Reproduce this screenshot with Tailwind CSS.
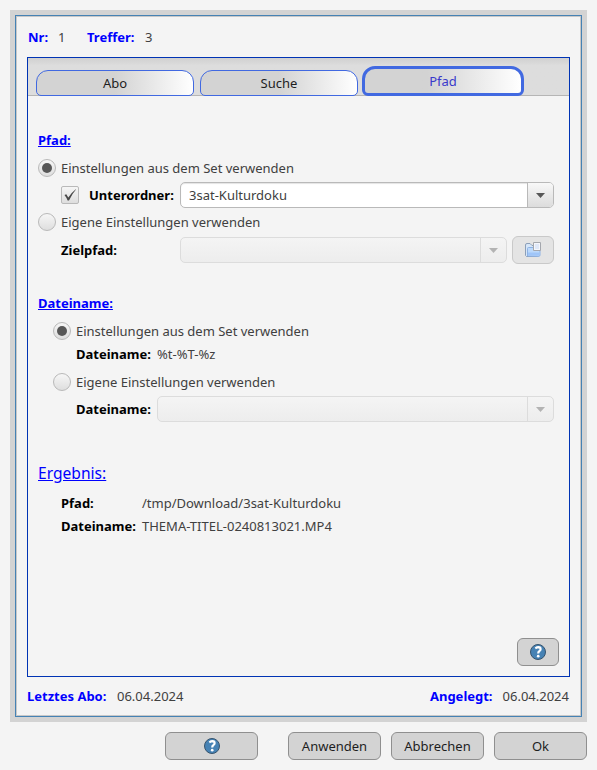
<!DOCTYPE html>
<html lang="de">
<head>
<meta charset="utf-8">
<title>Abo</title>
<script src="https://cdn.jsdelivr.net/npm/@tailwindcss/browser@4"></script>
</head>
<body class="w-[597px] h-[770px] overflow-hidden bg-[#f4f4f4] p-[10px] font-['Noto_Sans',sans-serif] text-[13px] leading-5 text-[#404040] whitespace-nowrap">
<main class="flex flex-col w-[577px] h-[712px] border-5 border-[#d3d3d3]">
 <div class="flex-1 flex flex-col border border-[#4682b4]">
  <div class="flex-1 flex flex-col border border-[#c8c8c8] px-[10px]">
   <div class="flex h-10 pt-[10px] pl-px">
    <b class="w-[30px] text-[#0000ff]">Nr:</b><span class="w-[29px]">1</span><b class="w-[58px] text-[#0000ff]">Treffer:</b><span>3</span>
   </div>
   <section class="h-[620px] flex flex-col border border-[#0033b4]">
    <nav class="flex items-end h-[38px] shrink-0 bg-linear-to-b from-[#d0d0d0] via-[#dddddd] via-20% to-[#dddddd] shadow-[inset_0_-1px_#b5b5b5] pl-2 text-[#1e1e1e]">
     <div class="w-[158px] h-[26px] flex items-center justify-center border border-[#4169e1] rounded-t-[12px] rounded-b-[5px] bg-linear-to-r from-[#d3d3d3] from-50% to-white">Abo</div>
     <div class="ml-[6px] w-[158px] h-[26px] flex items-center justify-center border border-[#4169e1] rounded-t-[12px] rounded-b-[5px] bg-linear-to-r from-[#d3d3d3] from-50% to-white">Suche</div>
     <div class="ml-1 w-[162px] h-[30px] flex items-center justify-center border-3 border-[#4169e1] rounded-t-[13px] rounded-b-[6px] bg-linear-to-r from-[#d3d3d3] from-40% to-white text-[#3a3acb]">Pfad</div>
    </nav>
    <div class="flex-1 flex flex-col pl-[10px] pr-[10px] pt-[34px]">
     <b class="text-[#0000ff] underline underline-offset-1">Pfad:</b>
     <label class="mt-[9px] h-[18px] flex items-center gap-[5px]">
      <i class="size-[18px] rounded-full border border-[#b9b9b9] bg-linear-to-b from-[#f6f6f6] to-[#dedede] flex items-center justify-center"><i class="size-[10px] rounded-full bg-[#575757]"></i></i>Einstellungen aus dem Set verwenden
     </label>
     <div class="mt-[5px] h-[26px] flex items-center pl-[23px] w-[516px]">
      <i class="size-[18px] rounded-[2px] border border-[#b9b9b9] bg-linear-to-b from-[#f6f6f6] to-[#dedede]"><svg class="size-4" viewBox="0 0 16 16" fill="#484848"><path d="M2.500 8L4.300 7.200L6.300 10.500Q9.500 5.500 13.800 2.200L14 2.600Q10 7 7 13.500H5.600Q4.500 10.500 2.500 8Z"/></svg></i>
      <b class="ml-[10px] w-[91px] text-black">Unterordner:</b>
      <div class="flex-1 h-[26px] flex rounded-[5px] border border-[#b9b9b9] bg-white overflow-hidden shadow-[inset_0_1px_1px_#e4e4e4]">
       <span class="flex-1 pl-2 leading-[25px]">3sat-Kulturdoku</span>
       <span class="w-[26px] border-l border-[#b9b9b9] bg-linear-to-b from-[#f8f8f8] to-[#dcdcdc] flex items-center justify-center"><svg width="9" height="5" viewBox="0 0 9 5"><path d="M0 0H9L4.500 5Z" fill="#575757"/></svg></span>
      </div>
     </div>
     <label class="mt-[5px] h-[18px] flex items-center gap-[5px]">
      <i class="size-[18px] rounded-full border border-[#b9b9b9] bg-linear-to-b from-[#f6f6f6] to-[#dedede]"></i>Eigene Einstellungen verwenden
     </label>
     <div class="mt-[5px] h-7 flex items-center pl-[23px] w-[516px]">
      <b class="w-[119px] text-black">Zielpfad:</b>
      <div class="w-[327px] h-[26px] flex rounded-[5px] border border-[#dcdcdc] bg-linear-to-b from-[#f4f4f4] to-[#ededed]">
       <span class="flex-1"></span>
       <span class="w-[26px] border-l border-[#dcdcdc] flex items-center justify-center"><svg width="9" height="5" viewBox="0 0 9 5"><path d="M0 0H9L4.500 5Z" fill="#b3b3b3"/></svg></span>
      </div>
      <div class="ml-[5px] w-[42px] h-7 rounded-[6px] border border-[#c9c9c9] bg-[#e4e4e4] flex items-center justify-center">
       <svg width="16" height="16" viewBox="0 0 16 16"><path d="M.5 13.500V3Q.5 1.500 2 1.500H5L7 3.500H13.500V13.500Q13.500 14.500 12.500 14.500H1.500Z" fill="#d6e6f8" stroke="#8c9fb8"/><path d="M2.500 14V6.500Q2.500 5.500 3.500 5.500H15V13Q15 14.300 14 14.300Z" fill="#bcd9fb" stroke="#8eb2e4"/><path d="M3 10.500H14.500V13.500H3Z" fill="#9fc5f8"/><path d="M8.500.5H15.500V8.500H8.500Z" fill="#f4f6fb" stroke="#a4a7ad"/><path d="M10 2H14V7H10Z" fill="#dfe8f8"/></svg>
      </div>
     </div>
     <b class="mt-[29px] text-[#0000ff] underline underline-offset-1">Dateiname:</b>
     <label class="mt-[9px] h-[18px] flex items-center gap-[5px] pl-[15px]">
      <i class="size-[18px] rounded-full border border-[#b9b9b9] bg-linear-to-b from-[#f6f6f6] to-[#dedede] flex items-center justify-center"><i class="size-[10px] rounded-full bg-[#575757]"></i></i>Einstellungen aus dem Set verwenden
     </label>
     <div class="mt-1 flex pl-[38px]"><b class="w-[81px] text-black">Dateiname:</b>%t-%T-%z</div>
     <label class="mt-[9px] h-[18px] flex items-center gap-[5px] pl-[15px]">
      <i class="size-[18px] rounded-full border border-[#b9b9b9] bg-linear-to-b from-[#f6f6f6] to-[#dedede]"></i>Eigene Einstellungen verwenden
     </label>
     <div class="mt-[5px] h-[26px] flex items-center pl-[38px] w-[516px]">
      <b class="w-[81px] text-black">Dateiname:</b>
      <div class="flex-1 h-[26px] flex rounded-[5px] border border-[#dcdcdc] bg-linear-to-b from-[#f4f4f4] to-[#ededed]">
       <span class="flex-1"></span>
       <span class="w-[26px] border-l border-[#dcdcdc] flex items-center justify-center"><svg width="9" height="5" viewBox="0 0 9 5"><path d="M0 0H9L4.500 5Z" fill="#b3b3b3"/></svg></span>
      </div>
     </div>
     <div class="mt-[39px] text-[15.600px] leading-6 text-[#0000ff] underline underline-offset-1">Ergebnis:</div>
     <div class="mt-2 flex pl-[23px]"><b class="w-[81px] text-black">Pfad:</b>/tmp/Download/3sat-Kulturdoku</div>
     <div class="mt-[3px] flex pl-[23px]"><b class="w-[81px] text-black">Dateiname:</b>THEMA-TITEL-0240813021.MP4</div>
     <div class="mt-auto mb-[10px] self-end w-[42px] h-7 rounded-[6px] border border-[#8f8f8f] bg-[#d3d3d3] flex items-center justify-center">
      <svg width="16" height="16" viewBox="0 0 16 16"><circle cx="8" cy="8" r="7.500" fill="#4682b4" stroke="#37546e"/><path d="M5.300 4.300Q7 3.200 8.500 3.200Q10.600 3.300 10.600 5.200Q10.600 6.300 9.300 7.200Q8.200 7.900 8.200 9.500" fill="none" stroke="#fff" stroke-width="2.200"/><circle cx="8.200" cy="12.200" r="1.350" fill="#fff"/></svg>
     </div>
    </div>
   </section>
   <div class="flex pt-[9px] pr-px">
    <b class="w-[90px] text-[#0000ff]">Letztes Abo:</b><span>06.04.2024</span>
    <b class="ml-auto mr-[10px] text-[#0000ff]">Angelegt:</b><span>06.04.2024</span>
   </div>
  </div>
 </div>
</main>
<footer class="mt-[10px] w-[577px] flex justify-end gap-[10px] text-[#1e1e1e]">
 <div class="mr-5 w-[93px] h-7 rounded-[6px] border border-[#8f8f8f] bg-[#d3d3d3] flex items-center justify-center">
  <svg width="16" height="16" viewBox="0 0 16 16"><circle cx="8" cy="8" r="7.500" fill="#4682b4" stroke="#37546e"/><path d="M5.300 4.300Q7 3.200 8.500 3.200Q10.600 3.300 10.600 5.200Q10.600 6.300 9.300 7.200Q8.200 7.900 8.200 9.500" fill="none" stroke="#fff" stroke-width="2.200"/><circle cx="8.200" cy="12.200" r="1.350" fill="#fff"/></svg>
 </div>
 <div class="w-[93px] h-7 rounded-[6px] border border-[#8f8f8f] bg-[#d3d3d3] flex items-center justify-center">Anwenden</div>
 <div class="w-[93px] h-7 rounded-[6px] border border-[#8f8f8f] bg-[#d3d3d3] flex items-center justify-center">Abbrechen</div>
 <div class="w-[93px] h-7 rounded-[6px] border border-[#8f8f8f] bg-[#d3d3d3] flex items-center justify-center">Ok</div>
</footer>
</body>
</html>
